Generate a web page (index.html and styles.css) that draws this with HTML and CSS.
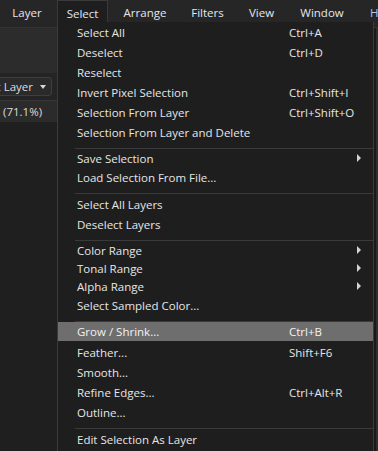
FILE: index.html
```html
<!DOCTYPE html>
<html>
<head>
<meta charset="utf-8">
<link rel="stylesheet" href="styles.css">
</head>
<body>
<div class="app">
  <div class="menubar">
    <div class="mb-item w-layer">Layer</div>
    <div class="mb-item w-select active"><span>Select</span></div>
    <div class="mb-item w-arrange">Arrange</div>
    <div class="mb-item w-filters">Filters</div>
    <div class="mb-item w-view">View</div>
    <div class="mb-item w-window">Window</div>
    <div class="mb-item w-help">Help</div>
  </div>
  <div class="workspace">
    <div class="panel">
      <div class="toolbar"></div>
      <div class="context">
        <div class="dropdown"><span>Current Layer</span><i class="caret"></i></div>
      </div>
      <div class="doctab"><span>(71.1%)</span></div>
      <div class="canvas"></div>
    </div>
    <div class="strip"></div>
  </div>

  <div class="menu">
    <div class="mi"><span class="lbl">Select All</span><span class="sc">Ctrl+A</span></div>
    <div class="mi"><span class="lbl">Deselect</span><span class="sc">Ctrl+D</span></div>
    <div class="mi"><span class="lbl">Reselect</span></div>
    <div class="mi"><span class="lbl">Invert Pixel Selection</span><span class="sc">Ctrl+Shift+I</span></div>
    <div class="mi"><span class="lbl">Selection From Layer</span><span class="sc">Ctrl+Shift+O</span></div>
    <div class="mi"><span class="lbl">Selection From Layer and Delete</span></div>
    <div class="sep"></div>
    <div class="mi sub"><span class="lbl">Save Selection</span><i class="arrow"></i></div>
    <div class="mi"><span class="lbl">Load Selection From File...</span></div>
    <div class="sep"></div>
    <div class="mi"><span class="lbl">Select All Layers</span></div>
    <div class="mi"><span class="lbl">Deselect Layers</span></div>
    <div class="sep"></div>
    <div class="mi sub"><span class="lbl">Color Range</span><i class="arrow"></i></div>
    <div class="mi sub"><span class="lbl">Tonal Range</span><i class="arrow"></i></div>
    <div class="mi sub"><span class="lbl">Alpha Range</span><i class="arrow"></i></div>
    <div class="mi"><span class="lbl">Select Sampled Color...</span></div>
    <div class="sep"></div>
    <div class="mi hl"><span class="lbl">Grow / Shrink...</span><span class="sc">Ctrl+B</span></div>
    <div class="mi"><span class="lbl">Feather...</span><span class="sc">Shift+F6</span></div>
    <div class="mi"><span class="lbl">Smooth...</span></div>
    <div class="mi"><span class="lbl">Refine Edges...</span><span class="sc">Ctrl+Alt+R</span></div>
    <div class="mi"><span class="lbl">Outline...</span></div>
    <div class="sep"></div>
    <div class="mi"><span class="lbl">Edit Selection As Layer</span></div>
  </div>
</div>
</body>
</html>
```

FILE: styles.css
```css
* { box-sizing: border-box; }
html, body {
  margin: 0;
  padding: 0;
  width: 378px;
  height: 451px;
  overflow: hidden;
  background: #1f1f1f;
  font-family: "Open Sans", "Noto Sans", sans-serif;
  font-size: 11.5px;
  color: #e4e4e4;
}
.app {
  position: relative;
  width: 378px;
  height: 451px;
  display: flex;
  flex-direction: column;
}
.menubar {
  height: 28px;
  flex: none;
  display: flex;
  background: #262626;
  border-bottom: 1px solid #333;
  white-space: nowrap;
}
.mb-item {
  flex: none;
  display: flex;
  justify-content: center;
  padding-top: 4px;
  line-height: 18px;
  color: #e2e8ef;
}
.w-layer { width: 54px; }
.w-select { width: 57px; padding: 0 3px; }
.w-select span {
  display: block;
  width: 100%;
  height: 22px;
  padding-top: 4px;
  text-align: center;
  background: #1f1e1f;
  border: 1px solid #3a3a3a;
  border-bottom: none;
}
.w-arrange { width: 68px; }
.w-filters { width: 57px; }
.w-view { width: 51px; }
.w-window { width: 70px; }
.w-help { width: 21px; justify-content: flex-start; padding-left: 13px; color: #a9c9f2; overflow: hidden; }

.workspace {
  flex: 1;
  display: flex;
}
.panel {
  flex: 1;
  display: flex;
  flex-direction: column;
  overflow: hidden;
}
.toolbar {
  height: 45px;
  background: #2c2c2c;
}
.context {
  height: 28px;
  background: #242424;
  border-bottom: 1px solid #383838;
  display: flex;
  align-items: center;
}
.dropdown {
  width: 90px;
  margin-left: -38px;
  height: 19px;
  border: 1px solid #3e3e3e;
  border-radius: 3px;
  background: #2a2a2a;
  display: flex;
  align-items: center;
  justify-content: flex-end;
  padding-right: 5px;
  gap: 7px;
  white-space: nowrap;
  color: #dcdcdc;
}
.caret {
  width: 0;
  height: 0;
  border-left: 3px solid transparent;
  border-right: 3px solid transparent;
  border-top: 4px solid #d8d8d8;
}
.doctab {
  height: 21px;
  background: #2b2b2b;
  display: flex;
  align-items: center;
  white-space: nowrap;
  color: #dcdcdc;
  padding-left: 3px;
}
.canvas {
  flex: 1;
  background: #1f1f1f;
}
.strip {
  width: 4px;
  flex: none;
  background: #2e2e2e;
  border-left: 2px solid #1a1a1a;
}

.menu {
  position: absolute;
  left: 57px;
  top: 22px;
  width: 317px;
  bottom: -2px;
  background: #1f1e1f;
  border: 1px solid #3a3a3a;
  border-top: none;
  white-space: nowrap;
}
.mi {
  height: 20px;
  display: flex;
  align-items: center;
  padding-left: 19px;
  color: #e6e6e6;
  position: relative;
}
.mi.sub { height: 18px; }
.mi .lbl { width: 212px; flex: none; }
.mi .sc { flex: none; }
.mi.hl {
  background: #6e6e6e;
  height: 19px;
  margin-bottom: 1px;
  color: #f2f2f2;
}
.arrow {
  position: absolute;
  right: 12px;
  top: 50%;
  margin-top: -4px;
  width: 0;
  height: 0;
  border-top: 4px solid transparent;
  border-bottom: 4px solid transparent;
  border-left: 4px solid #d4d4d4;
}
.sep {
  height: 7px;
  margin-left: 17px;
  padding-bottom: 1px;
  border-bottom: 1px solid #3a3a3a;
  background-clip: content-box;
}
```
